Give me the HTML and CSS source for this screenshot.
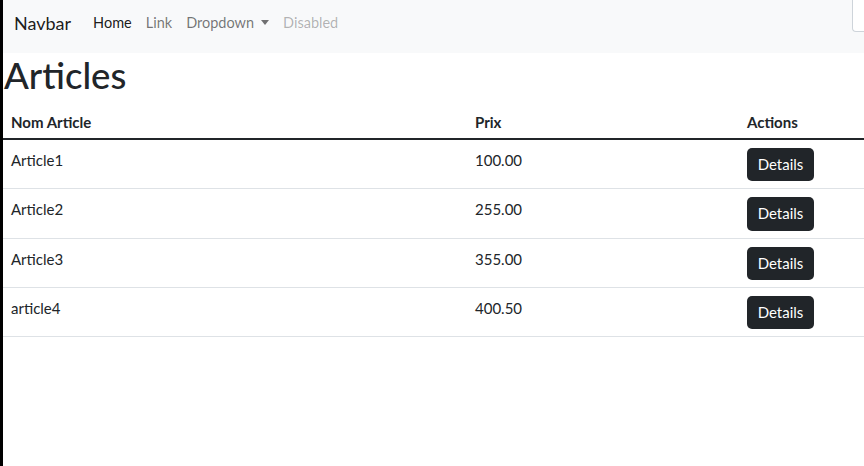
FILE: index.html
```html
<!DOCTYPE html>
<html lang="fr">
<head>
<meta charset="utf-8">
<title>Articles</title>
<link rel="stylesheet" href="styles.css">
</head>
<body>
<div class="page">
  <nav class="navbar">
    <a class="brand" href="#">Navbar</a>
    <ul class="nav">
      <li><a class="nav-link active" href="#">Home</a></li>
      <li><a class="nav-link" href="#">Link</a></li>
      <li><a class="nav-link dropdown" href="#">Dropdown<span class="caret"></span></a></li>
      <li><a class="nav-link disabled" href="#">Disabled</a></li>
    </ul>
    <div class="search"></div>
  </nav>
  <h1 class="title">Articles</h1>
  <table class="table">
    <thead>
      <tr><th class="c1">Nom Article</th><th class="c2">Prix</th><th class="c3">Actions</th></tr>
    </thead>
    <tbody>
      <tr><td>Article1</td><td>100.00</td><td><a class="btn" href="#">Details</a></td></tr>
      <tr><td>Article2</td><td>255.00</td><td><a class="btn" href="#">Details</a></td></tr>
      <tr><td>Article3</td><td>355.00</td><td><a class="btn" href="#">Details</a></td></tr>
      <tr><td>article4</td><td>400.50</td><td><a class="btn" href="#">Details</a></td></tr>
    </tbody>
  </table>
</div>
</body>
</html>
```
FILE: styles.css
```css
* { box-sizing: border-box; }
html, body { margin: 0; padding: 0; }
body {
  font-family: Lato, "Noto Sans", sans-serif;
  font-size: 15px;
  line-height: 1.5;
  color: #212529;
  background: #fff;
  overflow: hidden;
}
.page {
  border-left: 3px solid #000;
  min-height: 100vh;
}
.navbar {
  height: 53px;
  background: #f8f9fa;
  display: flex;
  align-items: flex-start;
  padding-left: 11px;
}
.brand {
  margin-top: 9px;
  font-size: 18px;
  line-height: 28px;
  color: rgba(0,0,0,.9);
  text-decoration: none;
  margin-right: 15px;
}
.nav {
  list-style: none;
  margin: 11px 0 0;
  padding: 0;
  display: flex;
}
.nav-link {
  display: block;
  padding: 0 7px;
  font-size: 14.5px;
  line-height: 24px;
  color: rgba(0,0,0,.55);
  text-decoration: none;
}
.nav-link.active { color: rgba(0,0,0,.9); }
.nav-link.disabled { color: rgba(0,0,0,.3); }
.caret {
  display: inline-block;
  margin-left: 7px;
  vertical-align: 3px;
  border-top: 5px solid rgba(0,0,0,.55);
  border-left: 4px solid transparent;
  border-right: 4px solid transparent;
}
.search {
  margin-left: auto;
  width: 12px;
  height: 32px;
  background: #fff;
  border: 1px solid #ced4da;
  border-top: 0;
  border-right: 0;
  border-bottom-left-radius: 4px;
}
.title {
  margin: 0 0 5px 1px;
  font-size: 36.5px;
  font-weight: 500;
  line-height: 44px;
}
.table {
  border-collapse: collapse;
  width: 900px;
}
.table th, .table td {
  text-align: left;
  vertical-align: top;
  padding: 8px;
  line-height: 24px;
}
.table th {
  font-weight: 700;
  padding-bottom: 4px;
  border-bottom: 2px solid #212529;
}
.table td {
  padding-bottom: 7px;
  border-bottom: 1px solid #dee2e6;
}
.c1 { width: 464px; }
.c2 { width: 272px; }
.btn {
  display: block;
  width: 67px;
  height: 33.3px;
  text-align: center;
  line-height: 33px;
  font-size: 15px;
  color: #fff;
  background: #212529;
  border-radius: 5px;
  text-decoration: none;
}
```
